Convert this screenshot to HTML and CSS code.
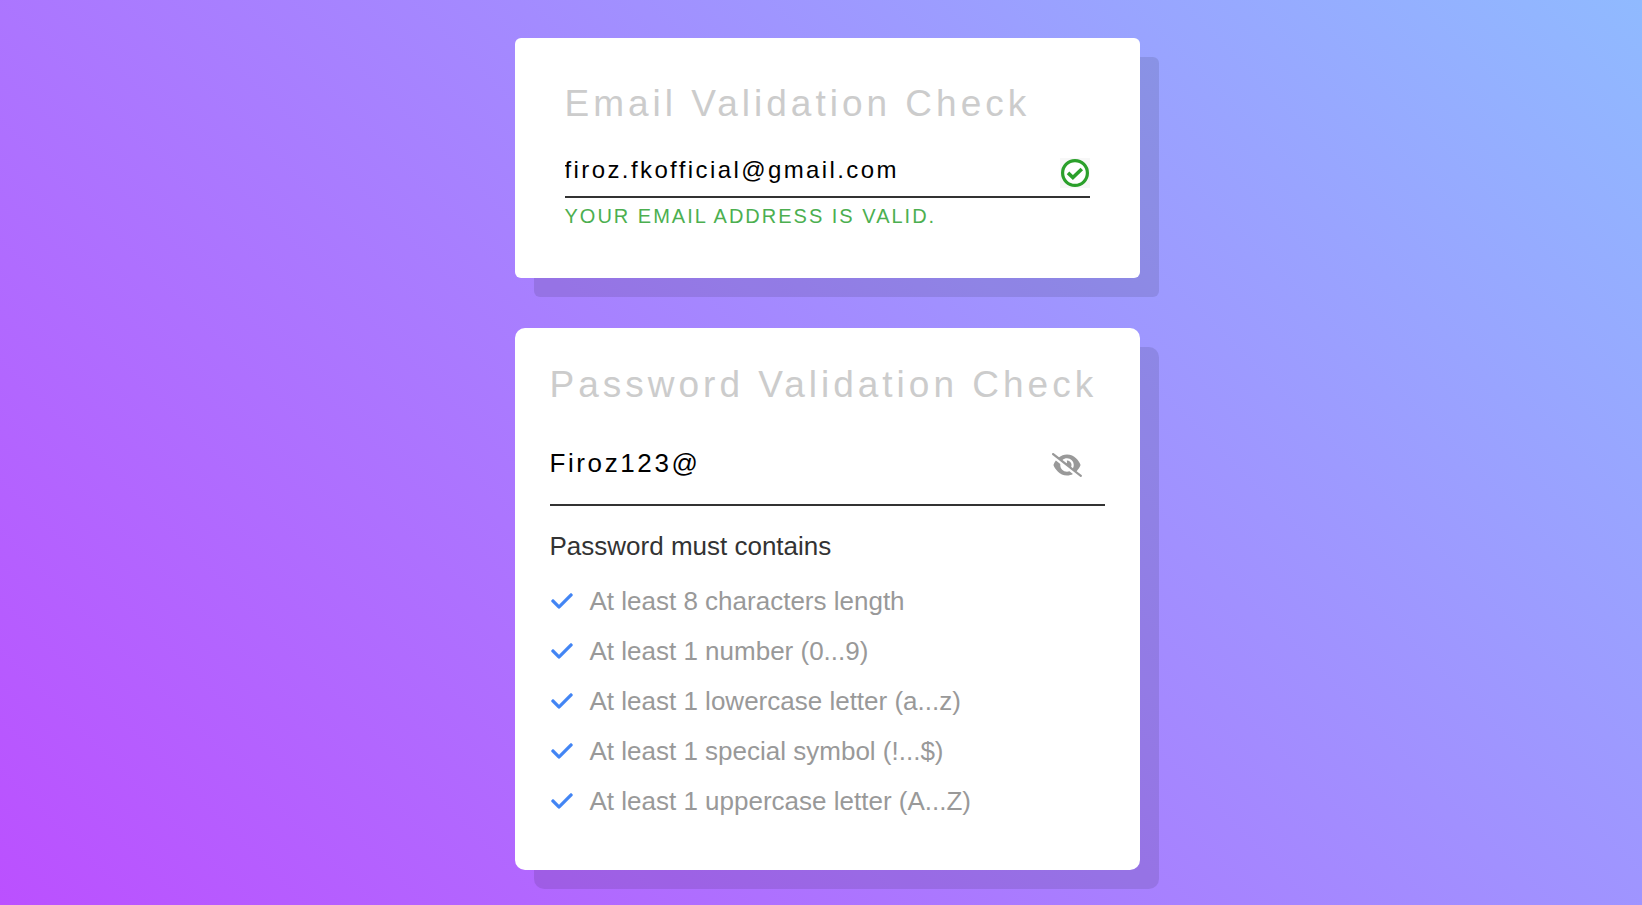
FILE: index.html
```html
<!DOCTYPE html>
<html lang="en">
<head>
<meta charset="utf-8">
<meta name="viewport" content="width=device-width, initial-scale=1">
<title>Email and Password Validation Check</title>
<link rel="stylesheet" href="styles.css">
</head>
<body>
<svg class="sprite" aria-hidden="true">
  <symbol id="check" viewBox="0 0 448 512"><path d="M438.6 105.4c12.5 12.5 12.5 32.8 0 45.3l-256 256c-12.5 12.5-32.8 12.5-45.3 0l-128-128c-12.5-12.5-12.5-32.8 0-45.3s32.8-12.5 45.3 0L160 338.7 393.4 105.4c12.5-12.5 32.8-12.5 45.3 0z"/></symbol>
</svg>
<main class="page">
  <form class="card card-email">
    <h1 class="title"><label for="email">Email Validation Check</label></h1>
    <div class="field">
      <input class="input" id="email" type="text" value="firoz.fkofficial@gmail.com" spellcheck="false" autocomplete="off">
      <svg class="status" viewBox="0 0 30 30" aria-hidden="true">
        <circle cx="15" cy="15" r="12.4" fill="#fff" stroke="#2ba02b" stroke-width="3.2"/>
        <path d="M8 14.9 12.9 19.6 21.8 11" fill="none" stroke="#2ba02b" stroke-width="3.6"/>
      </svg>
    </div>
    <p class="message">Your email address is valid.</p>
  </form>
  <form class="card card-password">
    <h2 class="title"><label for="password">Password Validation Check</label></h2>
    <div class="field">
      <input class="input" id="password" type="text" value="Firoz123@" spellcheck="false" autocomplete="off">
      <button class="toggle" type="button" aria-label="Hide password">
        <svg class="eye" viewBox="0 0 640 512" aria-hidden="true"><path d="M38.8 5.1C28.4-3.1 13.3-1.2 5.1 9.2S-1.2 34.7 9.2 42.9l592 464c10.4 8.2 25.5 6.3 33.7-4.1s6.3-25.5-4.1-33.7L525.6 386.7c39.6-40.6 66.4-86.1 79.9-118.4c3.3-7.9 3.3-16.7 0-24.6c-14.9-35.7-46.2-87.7-93-131.1C465.5 68.8 400.8 32 320 32c-68.2 0-125 26.3-169.3 60.8L38.8 5.1zM223.1 149.5C248.6 126.2 282.7 112 320 112c79.5 0 144 64.5 144 144c0 24.9-6.3 48.3-17.4 68.7L408 294.5c8.4-19.3 10.6-41.4 4.8-63.3c-11.1-41.5-47.8-69.4-88.6-71.1c-5.8-.2-9.2 6.1-7.4 11.7c2.1 6.4 3.3 13.2 3.3 20.3c0 10.2-2.4 19.8-6.6 28.3l-90.3-70.8zM373 389.9c-16.4 6.5-34.3 10.1-53 10.1c-79.5 0-144-64.5-144-144c0-6.9 .5-13.6 1.4-20.2L83.1 161.5C60.3 191.2 44 220.8 34.5 243.7c-3.3 7.9-3.3 16.7 0 24.6c14.9 35.7 46.2 87.7 93 131.1C174.5 443.2 239.2 480 320 480c47.8 0 89.9-12.9 126.2-32.5L373 389.9z"/></svg>
      </button>
    </div>
    <p class="rules-title">Password must contains</p>
    <ul class="rules">
      <li class="rule"><svg class="tick" aria-hidden="true"><use href="#check"/></svg><span>At least 8 characters length</span></li>
      <li class="rule"><svg class="tick" aria-hidden="true"><use href="#check"/></svg><span>At least 1 number (0...9)</span></li>
      <li class="rule"><svg class="tick" aria-hidden="true"><use href="#check"/></svg><span>At least 1 lowercase letter (a...z)</span></li>
      <li class="rule"><svg class="tick" aria-hidden="true"><use href="#check"/></svg><span>At least 1 special symbol (!...$)</span></li>
      <li class="rule"><svg class="tick" aria-hidden="true"><use href="#check"/></svg><span>At least 1 uppercase letter (A...Z)</span></li>
    </ul>
  </form>
</main>
</body>
</html>
```
FILE: styles.css
```css
* {
  margin: 0;
  padding: 0;
  box-sizing: border-box;
}

body {
  min-height: 100vh;
  font-family: Arial, "Liberation Sans", sans-serif;
  background: linear-gradient(45deg, #bb50ff, #90baff);
}

.sprite {
  display: none;
}

.page {
  display: flex;
  flex-direction: column;
  align-items: center;
  gap: 50px;
  padding: 38px 16px 35px 28px;
}

.card {
  width: 100%;
  max-width: 625px;
  background: #fff;
  box-shadow: 19px 19px 0 rgba(0, 0, 0, 0.1);
}

.card-email {
  padding: 44px 50px 48px;
  border-radius: 6px;
}

.card-password {
  padding: 35px 35px 44px;
  border-radius: 10px;
}

.title {
  font-size: 37px;
  line-height: 44px;
  font-weight: 400;
  letter-spacing: 4px;
  color: #ccc;
}

.field {
  display: flex;
  align-items: center;
  border-bottom: 2px solid #333;
}

.input {
  flex: 1;
  min-width: 0;
  border: 0;
  outline: 0;
  background: transparent;
  color: #000;
  font-family: inherit;
  letter-spacing: 0.1em;
}

.card-email .field {
  margin-top: 18px;
}

.card-email .input {
  height: 52px;
  font-size: 24px;
}

.card-password .field {
  margin-top: 15px;
  padding-right: 23px;
}

.card-password .input {
  height: 82px;
  font-size: 26px;
}

.status {
  width: 30px;
  height: 30px;
  margin-top: 6px;
  background: #f7f7f7;
}

.toggle {
  display: flex;
  margin-top: 4px;
  border: 0;
  background: none;
  cursor: pointer;
}

.eye {
  width: 30px;
  height: 24px;
  fill: #999;
}

.message {
  margin-top: 4px;
  font-size: 20px;
  line-height: 28px;
  letter-spacing: 2px;
  text-transform: uppercase;
  color: #4caf50;
}

.rules-title {
  margin-top: 25px;
  font-size: 26px;
  line-height: 30px;
  color: #333;
}

.rules {
  margin-top: 15px;
  padding-left: 1px;
  list-style: none;
}

.rule {
  display: flex;
  align-items: center;
  gap: 17px;
  font-size: 26px;
  line-height: 50px;
  color: #999;
}

.tick {
  flex: none;
  width: 22px;
  height: 24px;
  fill: #4285f4;
  stroke: #4285f4;
  stroke-width: 10px;
}
```
